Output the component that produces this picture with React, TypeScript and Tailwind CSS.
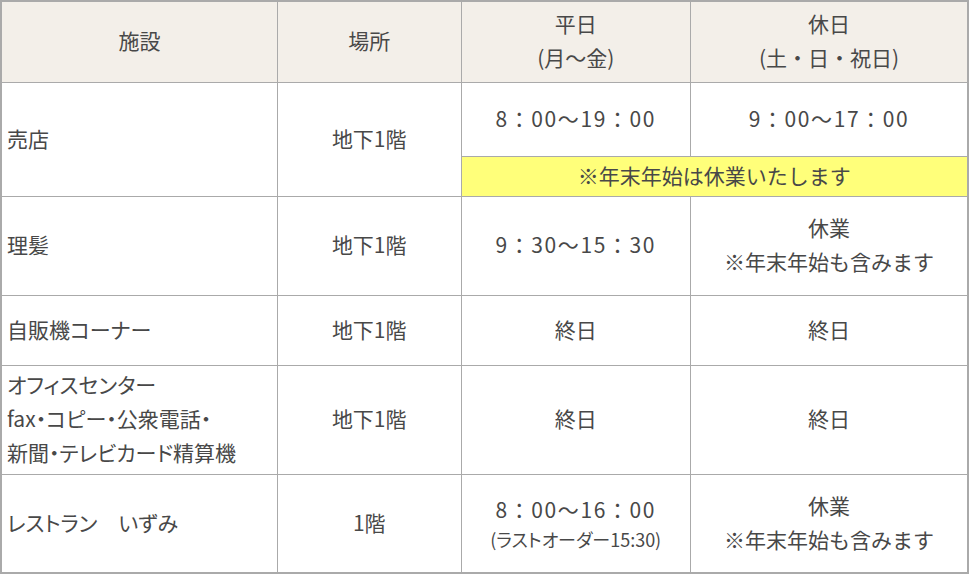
const font = { fontFamily: '"Noto Sans CJK JP", "Noto Sans", sans-serif' };

const cell = 'border border-[#aaaaaa] align-middle pb-[3px]';
const head = `${cell} font-normal text-center`;
const name = `${cell} pl-[5px] [font-feature-settings:'palt']`;
const mid = `${cell} text-center`;

export default function App() {
  return (
    <div className="bg-white" style={font}>
      <table className="w-[969px] border-collapse border-2 border-[#aaaaaa] text-[21px] leading-[34px] text-[#484848]">
        <colgroup>
          <col className="w-[277px]" />
          <col className="w-[184px]" />
          <col className="w-[230px]" />
          <col className="w-[278px]" />
        </colgroup>
        <thead>
          <tr className="h-[81px] bg-[#f3efe9]">
            <th className={head}>施設</th>
            <th className={head}>場所</th>
            <th className={head}>
              平日
              <br />
              (月～金)
            </th>
            <th className={head}>
              休日
              <br />
              (土・日・祝日)
            </th>
          </tr>
        </thead>
        <tbody>
          <tr className="h-[74px]">
            <td rowSpan={2} className={name}>売店</td>
            <td rowSpan={2} className={mid}>地下1階</td>
            <td className={`${mid} tracking-[1.6px]`}>8：00～19：00</td>
            <td className={`${mid} tracking-[1.6px]`}>9：00～17：00</td>
          </tr>
          <tr className="h-[40px]">
            <td colSpan={2} className={`${mid} bg-[#ffff7a]`}>※年末年始は休業いたします</td>
          </tr>
          <tr className="h-[99px]">
            <td className={name}>理髪</td>
            <td className={mid}>地下1階</td>
            <td className={`${mid} tracking-[1.6px]`}>9：30～15：30</td>
            <td className={mid}>
              休業
              <br />
              ※年末年始も含みます
            </td>
          </tr>
          <tr className="h-[70px]">
            <td className={name}>自販機コーナー</td>
            <td className={mid}>地下1階</td>
            <td className={mid}>終日</td>
            <td className={mid}>終日</td>
          </tr>
          <tr className="h-[109px]">
            <td className={name}>
              オフィスセンター
              <br />
              fax・コピー・公衆電話・
              <br />
              新聞・テレビカード精算機
            </td>
            <td className={mid}>地下1階</td>
            <td className={mid}>終日</td>
            <td className={mid}>終日</td>
          </tr>
          <tr className="h-[99px]">
            <td className={name}>レストラン&ensp;&ensp;いずみ</td>
            <td className={mid}>1階</td>
            <td className={mid}>
              <div className="tracking-[1.6px]">8：00～16：00</div>
              <div className="text-[18px] leading-[26px] [font-feature-settings:'palt']">(ラストオーダー15:30)</div>
            </td>
            <td className={mid}>
              休業
              <br />
              ※年末年始も含みます
            </td>
          </tr>
        </tbody>
      </table>
    </div>
  );
}
